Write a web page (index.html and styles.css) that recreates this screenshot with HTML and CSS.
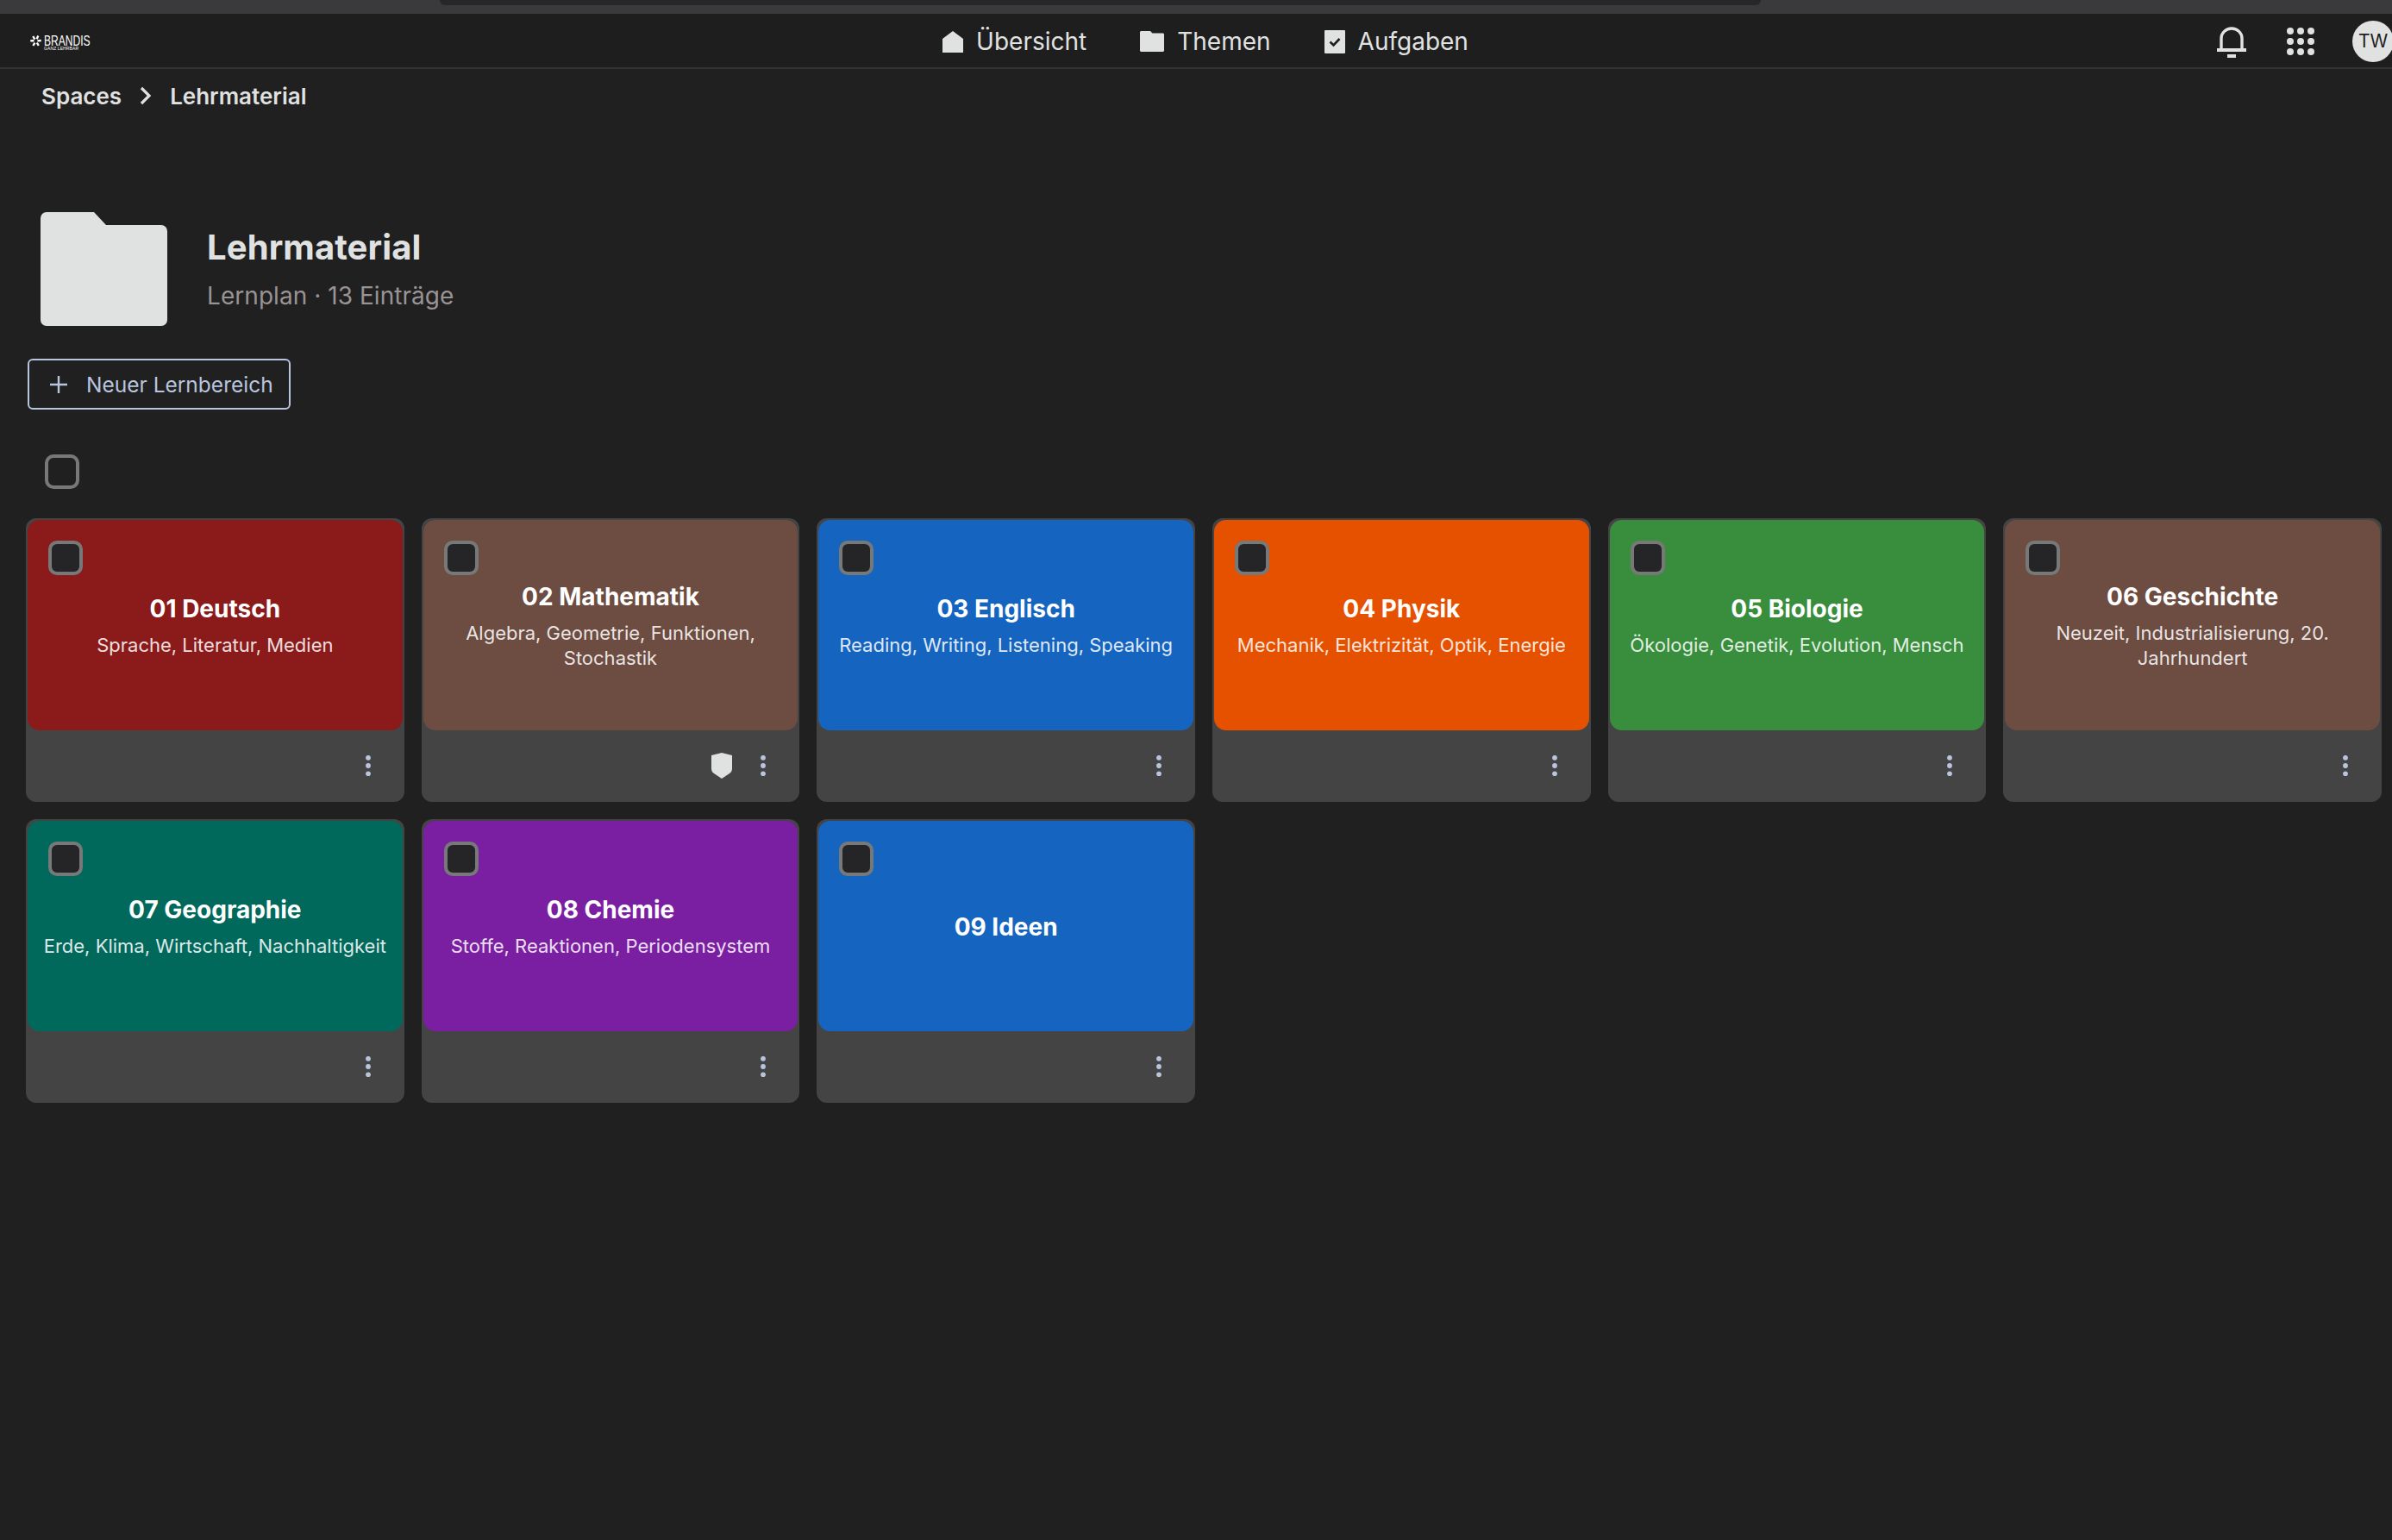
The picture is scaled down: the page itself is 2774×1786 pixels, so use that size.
FILE: index.html
```html
<!DOCTYPE html>
<html lang="de">
  <head>
    <meta charset="UTF-8">
    <title>Lehrmaterial</title>
    <link rel="stylesheet" href="styles.css">
  </head>
  <body>
    <svg class="sprite" xmlns="http://www.w3.org/2000/svg">
      <symbol id="dots" viewBox="0 0 6 24">
        <circle cx="3" cy="2.8" r="2.9"/>
        <circle cx="3" cy="12" r="2.9"/>
        <circle cx="3" cy="21.3" r="2.9"/>
      </symbol>
    </svg>

    <div class="browser-edge"><div class="address-bar"></div></div>

    <header class="topbar">
      <a class="logo" href="#">
        <svg width="13" height="13" viewBox="0 0 13 13" stroke="#fff" stroke-width="2.4">
          <path d="M0.3 6.3h4.2M3.3 1l2 3.6M9.3 0.5L7.6 4.3M12.7 6L8.4 6.4M9.8 11.8L7.8 8.5M3.4 12l2-3.4"/>
        </svg>
        <span class="logo-text">
          <span class="logo-name">BRANDIS</span>
          <span class="logo-sub">GANZ LEHRBAR</span>
        </span>
      </a>
      <nav class="nav">
        <a class="nav-item" href="#">
          <svg width="24" height="25" viewBox="0 0 24 25"><path d="M0 25V9L12 0l12 9v16z"/></svg>
          <span>Übersicht</span>
        </a>
        <a class="nav-item" href="#">
          <svg width="28" height="24" viewBox="0 0 28 24"><path d="M1 0H12l2.500 2.500H27l1 1V23l-1 1H1l-1-1V1z"/></svg>
          <span>Themen</span>
        </a>
        <a class="nav-item" href="#">
          <svg width="24" height="27" viewBox="0 0 24 27"><rect width="24" height="27" rx="1"/><path d="M6.500 13.500l4 4 7-7.500" fill="none" stroke="#1e1e1e" stroke-width="2.600"/></svg>
          <span>Aufgaben</span>
        </a>
      </nav>
      <div class="tools">
        <svg class="bell" width="34" height="36" viewBox="0 0 34 36">
          <path d="M5 26V13.500a12 11.500 0 0 1 24 0V26" fill="none" stroke="#e0e2e1" stroke-width="3.400"/>
          <path d="M0 25h34v4H0zM12 32h10v4H12z"/>
        </svg>
        <svg class="apps" width="32" height="32" viewBox="0 0 32 32">
          <circle cx="4" cy="4" r="4"/><circle cx="16" cy="4" r="4"/><circle cx="28" cy="4" r="4"/>
          <circle cx="4" cy="16" r="4"/><circle cx="16" cy="16" r="4"/><circle cx="28" cy="16" r="4"/>
          <circle cx="4" cy="28" r="4"/><circle cx="16" cy="28" r="4"/><circle cx="28" cy="28" r="4"/>
        </svg>
        <div class="avatar">TW</div>
      </div>
    </header>

    <div class="breadcrumb">
      <span>Spaces</span>
      <svg width="14" height="22" viewBox="0 0 14 22"><path d="M2 2l9 9-9 9" fill="none" stroke="#e0e2e1" stroke-width="3.200"/></svg>
      <span>Lehrmaterial</span>
    </div>

    <main>
      <div class="page-head">
        <svg width="147" height="132" viewBox="0 0 147 132"><path d="M7 0H62L76 15H140a7 7 0 0 1 7 7V125a7 7 0 0 1-7 7H7a7 7 0 0 1-7-7V7a7 7 0 0 1 7-7z"/></svg>
        <div class="page-title">
          <h1>Lehrmaterial</h1>
          <p>Lernplan · 13 Einträge</p>
        </div>
      </div>

      <button class="new-button">
        <svg width="20" height="20" viewBox="0 0 20 20"><path d="M10 0v20M0 10h20" stroke="#b9c5de" stroke-width="2.400"/></svg>
        <span>Neuer Lernbereich</span>
      </button>

      <div class="checkbox select-all"></div>

      <div class="grid">
        <div class="card">
          <div class="cover red">
            <div class="checkbox"></div>
            <h2>01 Deutsch</h2>
            <p>Sprache, Literatur, Medien</p>
          </div>
          <div class="card-foot"><svg class="more"><use href="#dots"/></svg></div>
        </div>
        <div class="card">
          <div class="cover brown">
            <div class="checkbox"></div>
            <h2>02 Mathematik</h2>
            <p>Algebra, Geometrie, Funktionen, Stochastik</p>
          </div>
          <div class="card-foot">
            <svg class="shield" width="24" height="30" viewBox="0 0 24 30"><path d="M12 0l12 3v16q0 3-3 5l-9 6-9-6q-3-2-3-5V3z"/></svg>
            <svg class="more"><use href="#dots"/></svg>
          </div>
        </div>
        <div class="card">
          <div class="cover blue">
            <div class="checkbox"></div>
            <h2>03 Englisch</h2>
            <p>Reading, Writing, Listening, Speaking</p>
          </div>
          <div class="card-foot"><svg class="more"><use href="#dots"/></svg></div>
        </div>
        <div class="card">
          <div class="cover orange">
            <div class="checkbox"></div>
            <h2>04 Physik</h2>
            <p>Mechanik, Elektrizität, Optik, Energie</p>
          </div>
          <div class="card-foot"><svg class="more"><use href="#dots"/></svg></div>
        </div>
        <div class="card">
          <div class="cover green">
            <div class="checkbox"></div>
            <h2>05 Biologie</h2>
            <p>Ökologie, Genetik, Evolution, Mensch</p>
          </div>
          <div class="card-foot"><svg class="more"><use href="#dots"/></svg></div>
        </div>
        <div class="card">
          <div class="cover brown">
            <div class="checkbox"></div>
            <h2>06 Geschichte</h2>
            <p>Neuzeit, Industrialisierung, 20. Jahrhundert</p>
          </div>
          <div class="card-foot"><svg class="more"><use href="#dots"/></svg></div>
        </div>
        <div class="card">
          <div class="cover teal">
            <div class="checkbox"></div>
            <h2>07 Geographie</h2>
            <p>Erde, Klima, Wirtschaft, Nachhaltigkeit</p>
          </div>
          <div class="card-foot"><svg class="more"><use href="#dots"/></svg></div>
        </div>
        <div class="card">
          <div class="cover purple">
            <div class="checkbox"></div>
            <h2>08 Chemie</h2>
            <p>Stoffe, Reaktionen, Periodensystem</p>
          </div>
          <div class="card-foot"><svg class="more"><use href="#dots"/></svg></div>
        </div>
        <div class="card">
          <div class="cover blue">
            <div class="checkbox"></div>
            <h2>09 Ideen</h2>
          </div>
          <div class="card-foot"><svg class="more"><use href="#dots"/></svg></div>
        </div>
      </div>
    </main>
  </body>
</html>
```
FILE: styles.css
```css
* {
  box-sizing: border-box;
}
body {
  margin: 0;
  min-height: 100vh;
  overflow: hidden;
  background: #202020;
  color: #e0e2e1;
  font-family: Inter, "Liberation Sans", sans-serif;
}
h1, h2, p {
  margin: 0;
}
a {
  color: inherit;
  text-decoration: none;
}
svg {
  display: block;
  flex: none;
  fill: #e0e2e1;
}
.sprite {
  display: none;
}

.browser-edge {
  height: 16px;
  background: #3a3a3c;
}
.address-bar {
  width: 1532px;
  height: 6px;
  margin-left: 510px;
  background: #27272a;
  border-radius: 0 0 12px 12px;
}

.topbar {
  display: grid;
  grid-template-columns: 1fr auto 1fr;
  align-items: center;
  height: 64px;
  padding-top: 2px;
  background: #1e1e1e;
  border-bottom: 2px solid #333;
}
.logo {
  display: flex;
  gap: 3px;
  margin: 3px 0 0 35px;
  color: #fff;
}
.logo-text {
  display: flex;
  flex-direction: column;
}
.logo-name {
  font: 17px/13px "Liberation Sans", sans-serif;
  transform: scaleX(0.71);
  transform-origin: left;
  width: 54px;
}
.logo-sub {
  font: 5px/5px "Liberation Sans", sans-serif;
  letter-spacing: 0.1px;
}
.nav {
  display: flex;
  gap: 62px;
  margin-left: 22px;
  font-size: 28px;
  line-height: 34px;
}
.nav-item {
  display: flex;
  align-items: center;
  gap: 15px;
}
.tools {
  display: flex;
  justify-content: flex-end;
  align-items: center;
}
.bell {
  margin: 2px 47px 0 0;
}
.apps {
  margin-right: 44px;
}
.avatar {
  width: 48px;
  height: 48px;
  margin-right: -2px;
  border-radius: 50%;
  background: #e0e2e1;
  color: #1e1e1e;
  font-size: 21px;
  line-height: 48px;
  text-align: center;
}

.breadcrumb {
  display: flex;
  align-items: center;
  gap: 21px;
  height: 62px;
  padding-left: 48px;
  font-size: 26px;
  font-weight: 600;
}

main {
  padding: 104px 12px 0 30px;
}
.page-head {
  display: flex;
  align-items: center;
  gap: 46.5px;
  padding-left: 16.5px;
}
.page-title {
  padding-top: 2px;
}
.page-head h1 {
  font-size: 40px;
  line-height: 48px;
  letter-spacing: 0.1px;
}
.page-head p {
  margin-top: 12px;
  color: #999394;
  font-size: 28px;
  line-height: 40px;
  letter-spacing: 0.05px;
}
.new-button {
  display: flex;
  align-items: center;
  gap: 22px;
  height: 59px;
  margin: 38px 0 0 2px;
  padding: 0 18px 0 24px;
  background: none;
  border: 2px solid #b9c5de;
  border-radius: 6px;
  color: #b9c5de;
  font: 24.5px/30px Inter, sans-serif;
}
.checkbox {
  width: 40px;
  height: 40px;
  border: 4px solid #777978;
  border-radius: 10px;
}
.select-all {
  margin: 52px 0 34px 22px;
}

.grid {
  display: grid;
  grid-template-columns: repeat(6, 1fr);
  gap: 20px;
}
.card {
  height: 329px;
  padding: 2px;
  background: #444;
  border-radius: 12px;
}
.cover {
  position: relative;
  display: flex;
  flex-direction: column;
  justify-content: center;
  gap: 11px;
  height: 244px;
  padding: 2px 16px 0;
  border-radius: 14px;
  color: #fff;
  text-align: center;
}
.cover .checkbox {
  position: absolute;
  top: 24px;
  left: 24px;
  background: #252527;
}
.cover h2 {
  font-size: 28px;
  line-height: 34px;
}
.cover p {
  color: rgba(255, 255, 255, 0.87);
  font-size: 22px;
  line-height: 29px;
}
.card-foot {
  display: flex;
  justify-content: flex-end;
  align-items: center;
  height: 81px;
  padding-right: 37px;
}
.more {
  width: 6px;
  height: 24px;
  fill: #b9c5de;
}
.shield {
  margin-right: 33px;
}

.red { background: #8b1a1a; }
.brown { background: #6d4c41; }
.blue { background: #1565c0; }
.orange { background: #e65100; }
.green { background: #388e3c; }
.teal { background: #00695c; }
.purple { background: #7b1fa2; }
```
